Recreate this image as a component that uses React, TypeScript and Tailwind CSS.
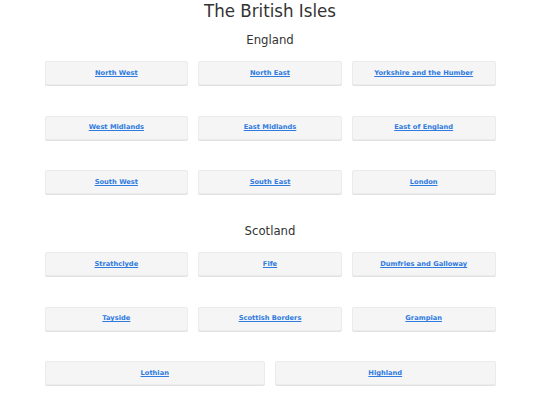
const regions = [
  { name: 'England', areas: ['North West', 'North East', 'Yorkshire and the Humber', 'West Midlands', 'East Midlands', 'East of England', 'South West', 'South East', 'London'] },
  { name: 'Scotland', areas: ['Strathclyde', 'Fife', 'Dumfries and Galloway', 'Tayside', 'Scottish Borders', 'Grampian', 'Lothian', 'Highland'] },
];

export default function App() {
  return (
    <div className="w-[540px] h-[405px] overflow-hidden bg-white text-[#333] font-['DejaVu_Sans',sans-serif]">
      <h1 className="text-center text-[18.5px] leading-[21px] font-['DejaVu_Sans_Condensed','DejaVu_Sans',sans-serif] font-stretch-condensed">The British Isles</h1>
      <div className="w-[451px] mx-auto">
        {regions.map((r, i) => (
          <section key={r.name} className={i === 0 ? 'mt-[9px]' : 'mt-[27px]'}>
            <h2 className="text-center text-[13px] leading-[20px] font-['DejaVu_Sans_Condensed','DejaVu_Sans',sans-serif] font-stretch-condensed">{r.name}</h2>
            <div className="mt-[11px] flex flex-wrap gap-x-[10px] gap-y-[30.5px]">
              {r.areas.map(a => (
                <div key={a} className="grow basis-[140px] h-[24px] flex items-center justify-center bg-[#f5f5f5] border border-[#ebebeb] rounded-[2px] shadow-[0_1px_0_#e2e2e2]">
                  <a href="#" className="text-[6.7px] font-bold text-[#2f7be0] underline">{a}</a>
                </div>
              ))}
            </div>
          </section>
        ))}
      </div>
    </div>
  );
}
